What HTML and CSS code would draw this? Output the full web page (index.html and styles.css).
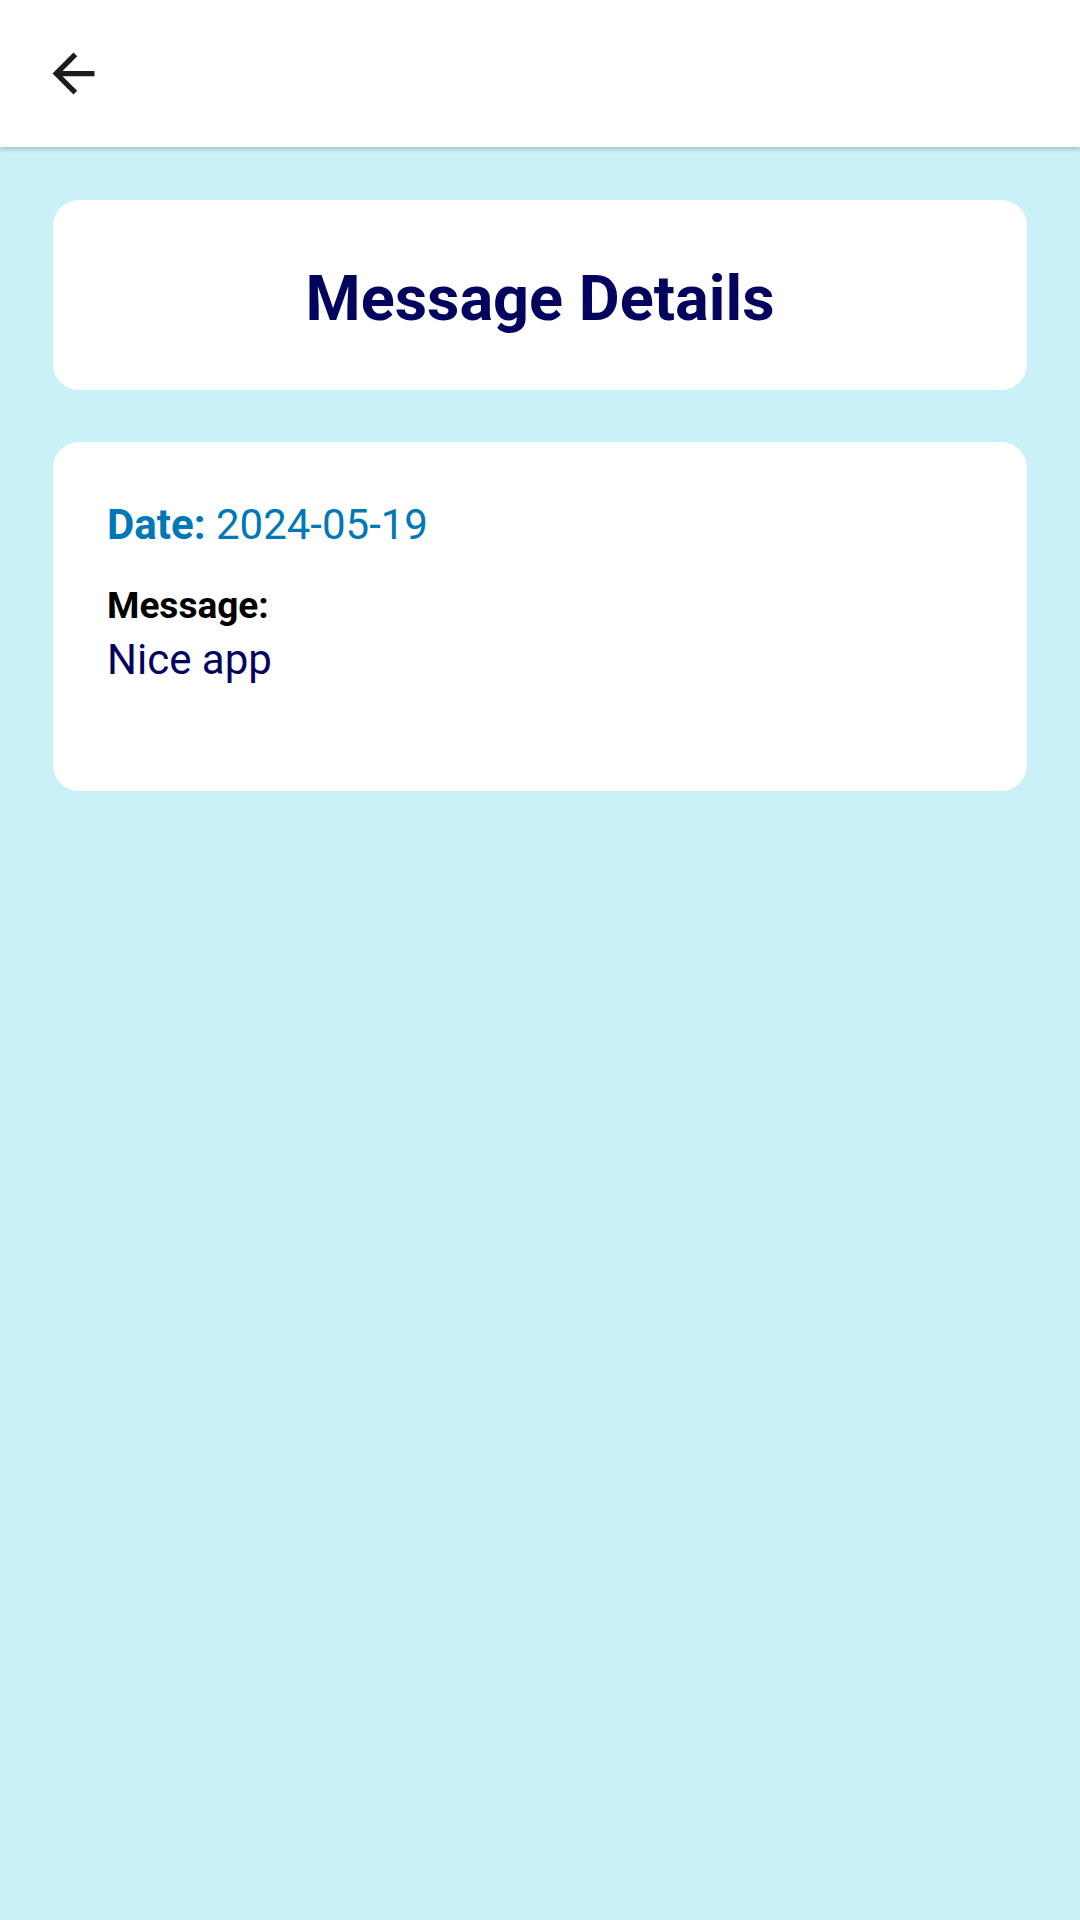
FILE: index.html
```html
<!DOCTYPE html>
<html>
<head>
<meta charset="utf-8">
<link rel="stylesheet" href="styles.css">
</head>
<body>
<header class="appbar">
  <button class="back" aria-label="Back">
    <svg viewBox="0 0 24 24" width="63" height="63"><path d="M20 11H7.83l5.59-5.59L12 4l-8 8 8 8 1.41-1.41L7.83 13H20v-2z" fill="#1c1b1f"/></svg>
  </button>
</header>
<main class="content">
  <section class="card title-card">
    <h1 class="title">Message Details</h1>
  </section>
  <section class="card detail-card">
    <p class="date"><span class="date-label">Date:</span> 2024-05-19</p>
    <p class="msg-label">Message:</p>
    <p class="msg-text">Nice app</p>
  </section>
</main>
</body>
</html>
```

FILE: styles.css
```css
html, body {
  margin: 0;
  padding: 0;
}
body {
  background: #caf0f8;
  font-family: Roboto, "Noto Sans", sans-serif;
  min-height: 1920px;
}
.appbar {
  height: 147px;
  background: #ffffff;
  display: flex;
  align-items: center;
  box-shadow: 0 2px 5px rgba(0, 0, 0, 0.22);
  position: relative;
  z-index: 1;
}
.back {
  margin-left: 42px;
  padding: 0;
  border: 0;
  background: none;
  width: 63px;
  height: 63px;
  display: flex;
}
.content {
  padding: 53px 53px 0;
  display: flex;
  flex-direction: column;
  gap: 52px;
}
.card {
  background: #ffffff;
  border-radius: 26px;
}
.title-card {
  padding: 62px 0 54px;
}
.title {
  margin: 0;
  text-align: center;
  font-size: 63px;
  font-weight: 700;
  color: #03045e;
  line-height: 74px;
}
.detail-card {
  padding: 58px 54px 106px;
  height: 349px;
  box-sizing: border-box;
}
.date {
  margin: 0;
  font-size: 42px;
  line-height: 49px;
  color: #0077b6;
}
.date-label {
  font-weight: 700;
}
.msg-label {
  margin: 35px 0 0;
  font-size: 37px;
  line-height: 43px;
  font-weight: 700;
  color: #000000;
}
.msg-text {
  margin: 8px 0 0;
  font-size: 42px;
  line-height: 49px;
  color: #03045e;
}
```
